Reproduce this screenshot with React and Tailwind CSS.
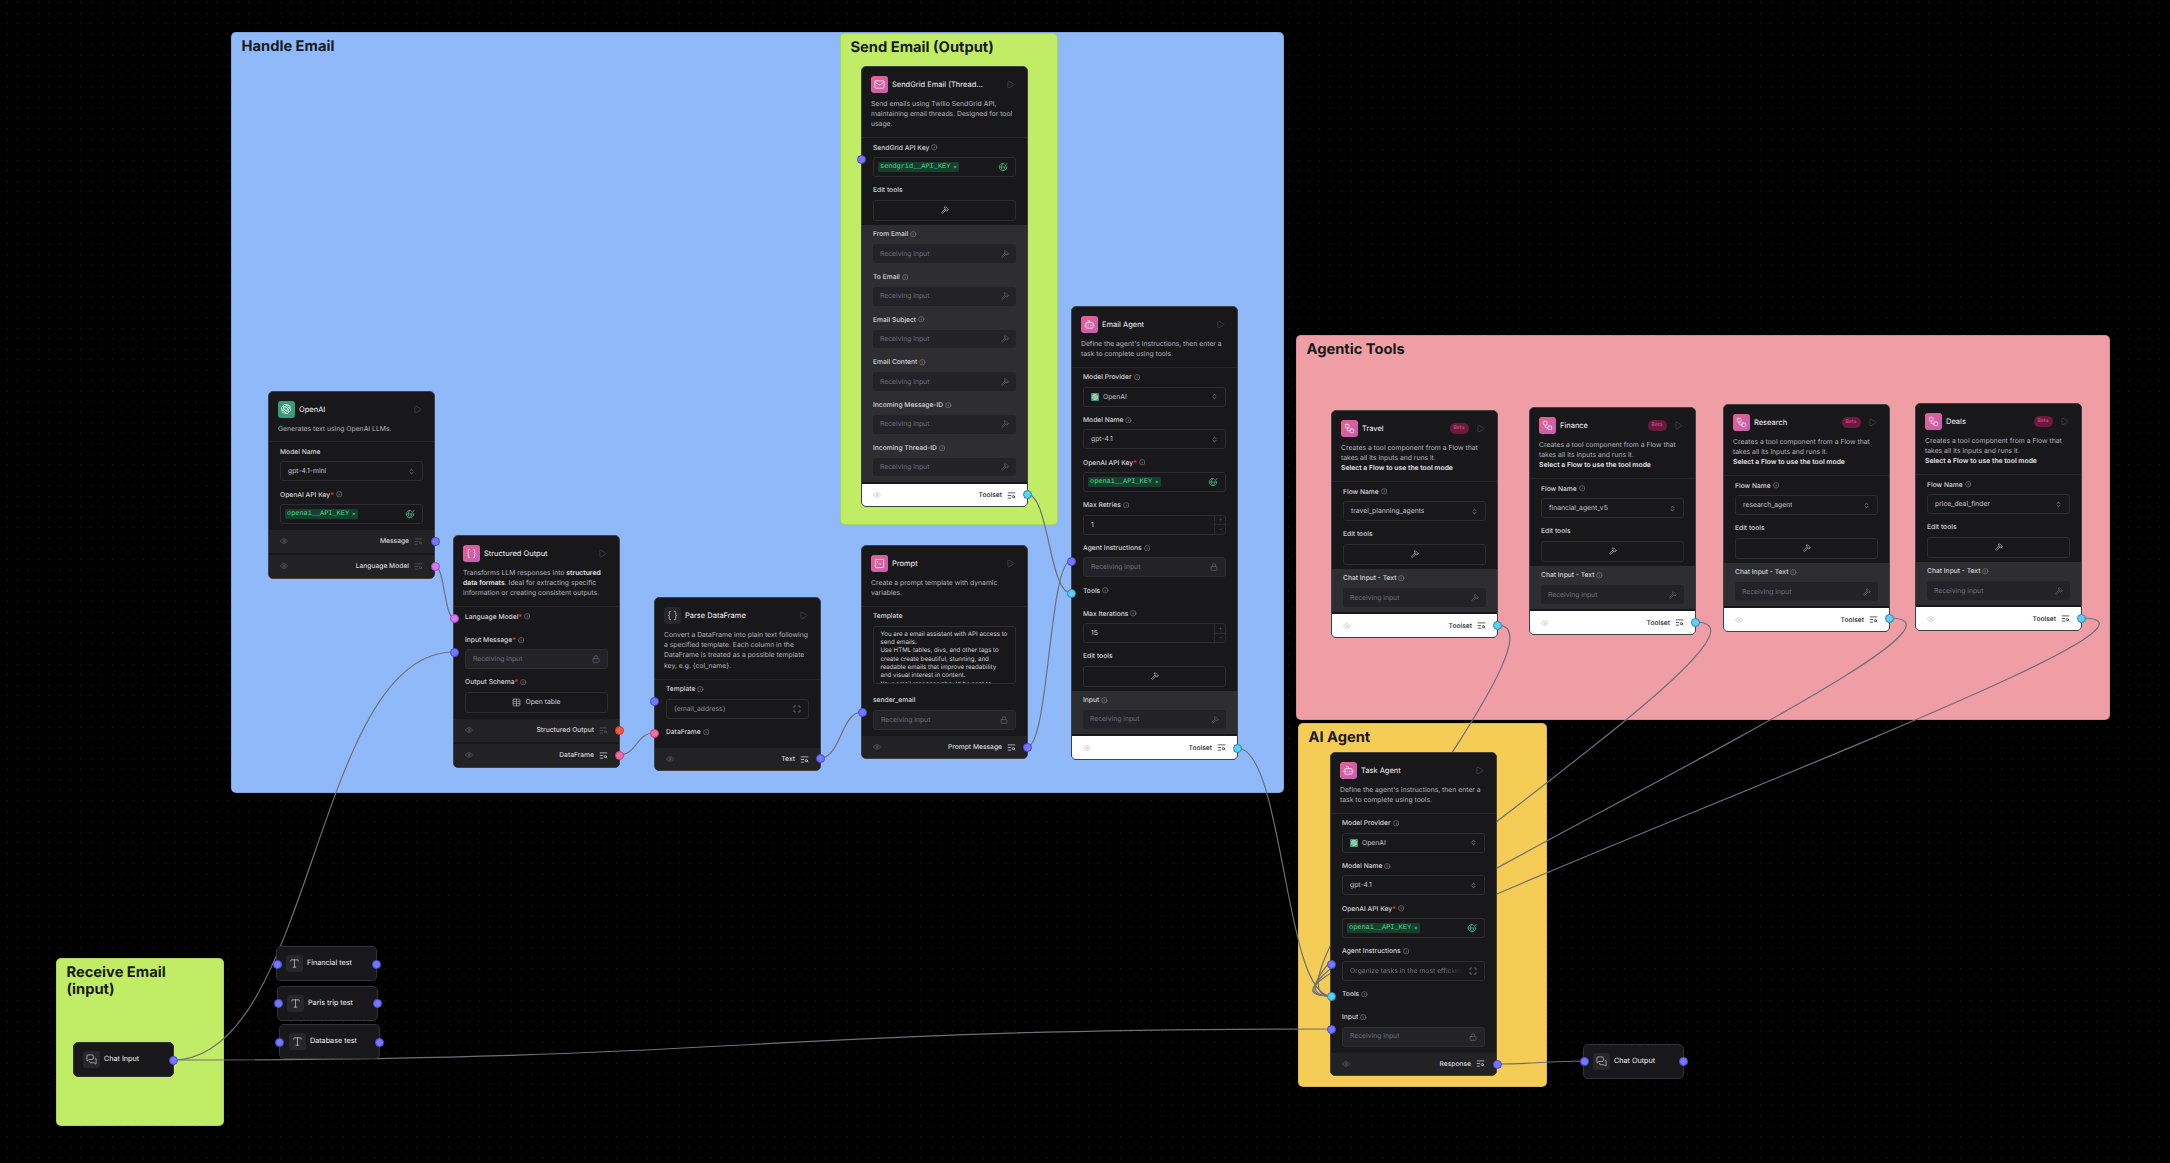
import React from 'react';
import { Bot, Braces, Eye, Hammer, Info, Lock, Mail, MessagesSquare, ChevronsUpDown, Play, Scan, SquareTerminal, Table, TextSearch, Type, Workflow, Plus, Minus } from 'lucide-react';
import { SiOpenai } from 'react-icons/si';

const H = {
  omMsg: [435, 541, 'blue'], omLm: [435, 566, 'purple'],
  soLm: [454, 618, 'purple'], soIn: [454, 652, 'blue'], soOut: [619, 730, 'red'], soDf: [619, 755, 'pink'],
  pdTpl: [654, 701, 'blue'], pdDf: [654, 733, 'pink'], pdOut: [820, 758, 'blue'],
  prIn: [862, 712, 'blue'], prOut: [1027, 747, 'blue'],
  sgKey: [861, 159, 'blue'], sgOut: [1027, 494, 'cyan'],
  eaIn: [1071, 561, 'blue'], eaTools: [1071, 593, 'cyan'], eaOut: [1237, 748, 'cyan'],
  taIn: [1331, 964, 'blue'], taTools: [1331, 996, 'cyan'], taInput: [1331, 1029, 'blue'], taOut: [1497, 1064, 'blue'],
  coIn: [1584, 1061, 'blue'], coOut: [1683, 1061, 'blue'],
  ciOut: [173, 1060, 'blue'],
  ftIn: [277, 964, 'blue'], ftOut: [376, 964, 'blue'],
  ptIn: [278, 1003, 'blue'], ptOut: [377, 1003, 'blue'],
  dtIn: [279, 1042, 'blue'], dtOut: [379, 1042, 'blue'],
  trOut: [1497, 625, 'cyan'], fiOut: [1695, 622, 'cyan'], reOut: [1889, 618, 'cyan'], deOut: [2081, 618, 'cyan'],
};

const EDGES = [
  ['omLm', 'soLm'], ['ciOut', 'soIn'], ['ciOut', 'taInput'], ['soDf', 'pdDf'], ['pdOut', 'prIn'],
  ['prOut', 'eaIn'], ['sgOut', 'eaTools'], ['eaOut', 'taTools'], ['trOut', 'taTools'], ['fiOut', 'taTools'],
  ['reOut', 'taTools'], ['deOut', 'taTools'], ['taOut', 'coIn'],
];

// same curve as react flow's bezier edge
const edgePath = ([sx, sy], [tx, ty]) => {
  const d = tx - sx;
  const off = d >= 0 ? d * 0.5 : 6.25 * Math.sqrt(-d);
  return `M${sx},${sy} C${sx + off},${sy} ${tx - off},${ty} ${tx},${ty}`;
};

const handleColors = {
  blue: 'bg-[#7379fa] border-[#4a45dd]',
  purple: 'bg-[#d77cf0] border-[#a63fd0]',
  red: 'bg-[#ee5a4a] border-[#c93a2e]',
  pink: 'bg-[#ee6ea8] border-[#c53c80]',
  cyan: 'bg-[#5fd0f0] border-[#1f86c0]',
};

const Handle = ({ at }) => (
  <div
    className={`absolute w-[9px] h-[9px] -ml-[4.5px] -mt-[4.5px] rounded-full border ${handleColors[at[2]]}`}
    style={{ left: at[0], top: at[1] }}
  />
);

const Group = ({ x, y, w, h, color, title }) => (
  <div
    className={`absolute rounded-[5px] border border-black/10 px-[9.5px] py-[5px] ${color}`}
    style={{ left: x, top: y, width: w, height: h }}
  >
    <div className="text-[14.7px] leading-[17px] font-bold text-[#18181b]">{title}</div>
  </div>
);

const Tip = () => <Info size={6.5} className="text-[#8b8b93] shrink-0" />;

const Label = ({ children, req, info = true }) => (
  <div className="flex items-center gap-[2px] h-[10px] text-[6.7px] font-medium text-[#d4d4d8] whitespace-nowrap">
    <span>{children}{req && <span className="text-[#ef4444]">*</span>}</span>
    {info && <Tip />}
  </div>
);

const Box = ({ children, className = '' }) => (
  <div className={`h-[20px] flex items-center rounded-[3px] border border-[#2c2c31] px-[7px] text-[6.8px] text-[#c4c4cc] ${className}`}>
    {children}
  </div>
);

const Select = ({ value, logo }) => (
  <Box className="justify-between">
    <span className="flex items-center gap-[4px] truncate">
      {logo && <span className="w-[8px] h-[8px] rounded-[1px] bg-[#3b9a77] flex items-center justify-center"><SiOpenai size={6} className="text-white" /></span>}
      {value}
    </span>
    <ChevronsUpDown size={7} className="text-[#a1a1aa]" />
  </Box>
);

const GlobeCheck = () => (
  <svg width="10" height="10" viewBox="0 0 24 24" fill="none" stroke="#3f9d6f" strokeWidth="2.4" strokeLinecap="round" strokeLinejoin="round">
    <path d="M21 12a9 9 0 1 1-8-8.9" />
    <path d="M3 12h18" />
    <path d="M12 3c-3 3-3.6 6-3.6 9s.6 6 3.6 9c2.4-2.4 3.4-5 3.6-7.5" />
    <path d="m15 6 2.5 2.5L22 3" />
  </svg>
);

const KeyInput = ({ value }) => (
  <Box className="justify-between !pl-[4px]">
    <span className="flex items-center gap-[3px] h-[10px] rounded-[1.5px] bg-[#173f30] px-[2px] text-[#4ade80] font-['Liberation_Mono',monospace] text-[6.9px]">
      {value}<span className="text-[#6ee7a0] text-[6px]">×</span>
    </span>
    <GlobeCheck />
  </Box>
);

const Locked = () => (
  <Box className="justify-between bg-[#232327] !text-[#71717a]">
    <span>Receiving input</span>
    <Lock size={8} className="text-[#6b6b73]" />
  </Box>
);

const NumberBox = ({ value }) => (
  <div className="h-[20px] flex items-center justify-between rounded-[3px] border border-[#2c2c31] pl-[7px] text-[6.8px] text-[#d4d4d8]">
    <span>{value}</span>
    <div className="w-[11px] h-full flex flex-col border-l border-[#2c2c31]">
      <div className="flex-1 flex items-center justify-center border-b border-[#2c2c31]"><Plus size={5} className="text-[#55555c]" /></div>
      <div className="flex-1 flex items-center justify-center"><Minus size={5} className="text-[#55555c]" /></div>
    </div>
  </div>
);

const EditTools = () => (
  <div className="flex flex-col gap-[4.5px]">
    <Label info={false}>Edit tools</Label>
    <div className="h-[21px] flex items-center justify-center rounded-[3px] border border-[#2c2c31]">
      <Hammer size={8} className="text-[#b4b4bb]" />
    </div>
  </div>
);

const Field = ({ label, req, info, children, pad }) => (
  <div className={`flex flex-col gap-[4.5px] ${pad ? 'pb-[5px]' : ''}`}>
    <Label req={req} info={info}>{label}</Label>
    {children}
  </div>
);

const ToolInputs = ({ names }) => (
  <div className="bg-[#2e2e32] px-[11px] pt-[4px] pb-[5.5px] flex flex-col gap-[9.2px] mt-[4.5px]">
    {names.map((n) => (
      <div key={n} className="flex flex-col gap-[5px]">
        <Label>{n}</Label>
        <div className="h-[18.5px] flex items-center justify-between rounded-[3px] bg-[#232327] px-[7px] text-[6.8px] text-[#71717a]">
          <span>Receiving input</span>
          <Hammer size={8} className="text-[#62626a]" />
        </div>
      </div>
    ))}
  </div>
);

const Output = ({ label, active, tool }) => (
  <div className={`h-[22.5px] flex items-center justify-between px-[11px] ${tool ? 'bg-white mt-[2px]' : 'bg-[#222225]'}`}>
    <Eye size={8} className={tool ? 'text-[#c4c4cc]' : 'text-[#62626a]'} />
    <div className={`flex items-center gap-[5px] text-[6.7px] font-medium ${tool ? 'text-[#27272a]' : 'text-[#d4d4d8]'}`}>
      <span>{label}</span>
      <TextSearch size={9} className={tool ? 'text-[#27272a]' : active ? 'text-[#d4d4d8]' : 'text-[#5a5a62]'} />
    </div>
  </div>
);

const NodeIcon = ({ icon: Icon, pink }) => (
  <div className={`w-[16.5px] h-[16.5px] shrink-0 rounded-[3px] flex items-center justify-center ${pink ? 'bg-gradient-to-br from-[#e4608f] to-[#c45fb5] text-white' : 'bg-[#27272a] text-[#d4d4d8]'}`}>
    <Icon size={11} strokeWidth={1.5} />
  </div>
);

const Node = ({ x, y, icon, pink = true, title, beta, children, desc, logo }) => (
  <div
    className="absolute w-[167px] rounded-[5px] border border-[#3f3f46] bg-[#18181b] overflow-hidden"
    style={{ left: x, top: y }}
  >
    <div className="px-[9px] pt-[9px] pb-[7.5px] border-b border-[#26262a]">
      <div className="flex items-center gap-[4.5px] h-[16.5px]">
        {logo ? (
          <div className="w-[16.5px] h-[16.5px] shrink-0 rounded-[3px] bg-[#3b9a77] flex items-center justify-center text-white"><SiOpenai size={10} /></div>
        ) : (
          <NodeIcon icon={icon} pink={pink} />
        )}
        <span className="flex-1 truncate text-[7.5px] text-[#f4f4f5]">{title}</span>
        {beta && <span className="h-[11px] px-[4px] rounded-full bg-[#6b1a3e] text-[#c4487f] text-[5px] font-semibold flex items-center">Beta</span>}
        <Play size={9} strokeWidth={1.5} className="text-[#55555c] ml-[3px] mr-[3px]" />
      </div>
      <div className="mt-[6px] text-[6.8px] leading-[10.4px] text-[#b4b4bb]">{desc}</div>
    </div>
    {children}
  </div>
);

const Body = ({ children, last }) => (
  <div className={`px-[11px] pt-[4.5px] flex flex-col gap-[8.15px] ${last ? 'pb-[6px]' : ''}`}>{children}</div>
);

const Footer = ({ children }) => <div className="flex flex-col gap-[2.5px] bg-[#18181b]">{children}</div>;

const MiniNode = ({ x, y, icon: Icon, title }) => (
  <div
    className="absolute w-[101px] h-[35px] rounded-[5px] border border-[#333338] bg-[#18181b] flex items-center gap-[4.5px] px-[9px]"
    style={{ left: x, top: y }}
  >
    <div className="w-[16.5px] h-[16.5px] rounded-[3px] bg-[#27272a] text-[#d4d4d8] flex items-center justify-center">
      <Icon size={11} strokeWidth={1.5} />
    </div>
    <span className="text-[7.2px] text-[#f4f4f5] whitespace-nowrap">{title}</span>
  </div>
);

const FlowDesc = () => (
  <>Creates a tool component from a Flow that takes all its inputs and runs it.<br /><b className="font-semibold text-[#e4e4e7]">Select a Flow to use the tool mode</b></>
);

const FlowNode = ({ x, y, title, flow }) => (
  <Node x={x} y={y} icon={Workflow} title={title} beta desc={<FlowDesc />}>
    <Body>
      <Field label="Flow Name"><Select value={flow} /></Field>
      <EditTools />
    </Body>
    <ToolInputs names={['Chat Input - Text']} />
    <Output label="Toolset" tool />
  </Node>
);

const AGENT_DESC = "Define the agent's instructions, then enter a task to complete using tools.";

export default function App() {
  return (
    <div className="relative w-[2170px] h-[1163px] overflow-hidden bg-black bg-[radial-gradient(#34343a_0.7px,transparent_0.8px)] bg-[size:10.5px_10.5px] bg-[position:2px_-2.5px] font-['Inter',sans-serif] [text-rendering:geometricPrecision]">
      <Group x={231} y={32} w={1053} h={761} color="bg-[#8fb9f9]" title="Handle Email" />
      <Group x={840} y={33} w={218} h={492} color="bg-[#c1ed66]" title="Send Email (Output)" />
      <Group x={1296} y={335} w={814} h={385} color="bg-[#ef9ea6]" title="Agentic Tools" />
      <Group x={1298} y={723} w={249} h={364} color="bg-[#f5cd56]" title="AI Agent" />
      <Group x={56} y={958} w={168} h={168} color="bg-[#c1ed66]" title={<>Receive Email<br />(input)</>} />

      <svg className="absolute inset-0" width="2170" height="1163" fill="none">
        {EDGES.map(([a, b]) => (
          <path key={a + b} d={edgePath(H[a], H[b])} stroke="#6f6f76" strokeWidth="1.2" />
        ))}
      </svg>

      <MiniNode x={73} y={1042} icon={MessagesSquare} title="Chat Input" />
      <MiniNode x={276} y={946} icon={Type} title="Financial test" />
      <MiniNode x={277} y={986} icon={Type} title="Paris trip test" />
      <MiniNode x={279} y={1024} icon={Type} title="Database test" />
      <MiniNode x={1583} y={1044} icon={MessagesSquare} title="Chat Output" />

      <Node x={268} y={391} logo title="OpenAI" desc="Generates text using OpenAI LLMs.">
        <Body last>
          <Field label="Model Name" info={false}><Select value="gpt-4.1-mini" /></Field>
          <Field label="OpenAI API Key" req><KeyInput value="openai__API_KEY" /></Field>
        </Body>
        <Footer>
          <Output label="Message" />
          <Output label="Language Model" />
        </Footer>
      </Node>

      <Node x={453} y={535} icon={Braces} title="Structured Output"
        desc={<>Transforms LLM responses into <b className="font-semibold text-[#e4e4e7]">structured data formats</b>. Ideal for extracting specific information or creating consistent outputs.</>}>
        <Body last>
          <Field label="Language Model" req pad />
          <Field label="Input Message" req><Locked /></Field>
          <Field label="Output Schema" req>
            <div className="h-[21px] flex items-center justify-center gap-[4px] rounded-[3px] border border-[#2c2c31] text-[6.8px] text-[#d4d4d8]">
              <Table size={9} strokeWidth={1.4} /> Open table
            </div>
          </Field>
        </Body>
        <Footer>
          <Output label="Structured Output" />
          <Output label="DataFrame" active />
        </Footer>
      </Node>

      <Node x={654} y={597} icon={Braces} pink={false} title="Parse DataFrame"
        desc="Convert a DataFrame into plain text following a specified template. Each column in the DataFrame is treated as a possible template key, e.g. {col_name}.">
        <Body last>
          <Field label="Template">
            <Box className="justify-between !text-[#8b8b93]"><span>{'{email_address}'}</span><Scan size={8} className="text-[#a1a1aa]" /></Box>
          </Field>
          <Field label="DataFrame" pad />
        </Body>
        <Output label="Text" active />
      </Node>

      <Node x={861} y={545} icon={SquareTerminal} title="Prompt" desc="Create a prompt template with dynamic variables.">
        <Body last>
          <Field label="Template" info={false}>
            <div className="h-[58px] mb-[3.5px] overflow-hidden rounded-[3px] border border-[#2c2c31] px-[6.5px] pt-[4px] text-[6.15px] leading-[8.3px] text-[#d4d4d8]">
              You are a email assistant with API access to send emails.<br />
              Use HTML tables, divs, and other tags to create create beautiful, stunning, and readable emails that improve readability and visual interest in content.<br />
              Your email response should be sent to
            </div>
          </Field>
          <Field label="sender_email" info={false}><Locked /></Field>
        </Body>
        <Output label="Prompt Message" active />
      </Node>

      <Node x={861} y={66} icon={Mail} title="SendGrid Email (Thread..."
        desc="Send emails using Twilio SendGrid API, maintaining email threads. Designed for tool usage.">
        <Body>
          <Field label="SendGrid API Key"><KeyInput value="sendgrid__API_KEY" /></Field>
          <EditTools />
        </Body>
        <ToolInputs names={['From Email', 'To Email', 'Email Subject', 'Email Content', 'Incoming Message-ID', 'Incoming Thread-ID']} />
        <Output label="Toolset" tool />
      </Node>

      <Node x={1071} y={306} icon={Bot} title="Email Agent" desc={AGENT_DESC}>
        <Body>
          <Field label="Model Provider"><Select value="OpenAI" logo /></Field>
          <Field label="Model Name"><Select value="gpt-4.1" /></Field>
          <Field label="OpenAI API Key" req><KeyInput value="openai__API_KEY" /></Field>
          <Field label="Max Retries"><NumberBox value="1" /></Field>
          <Field label="Agent Instructions"><Locked /></Field>
          <Field label="Tools" pad />
          <Field label="Max Iterations"><NumberBox value="15" /></Field>
          <EditTools />
        </Body>
        <ToolInputs names={['Input']} />
        <Output label="Toolset" tool />
      </Node>

      <FlowNode x={1331} y={410} title="Travel" flow="travel_planning_agents" />
      <FlowNode x={1529} y={407} title="Finance" flow="financial_agent_v5" />
      <FlowNode x={1723} y={404} title="Research" flow="research_agent" />
      <FlowNode x={1915} y={403} title="Deals" flow="price_deal_finder" />

      <Node x={1330} y={752} icon={Bot} title="Task Agent" desc={AGENT_DESC}>
        <Body last>
          <Field label="Model Provider"><Select value="OpenAI" logo /></Field>
          <Field label="Model Name"><Select value="gpt-4.1" /></Field>
          <Field label="OpenAI API Key" req><KeyInput value="openai__API_KEY" /></Field>
          <Field label="Agent Instructions">
            <Box className="justify-between !text-[#71717a]">
              <span className="truncate [mask-image:linear-gradient(to_right,black_85%,transparent)]">Organize tasks in the most efficient</span>
              <Scan size={8} className="text-[#a1a1aa] shrink-0 ml-[2px]" />
            </Box>
          </Field>
          <Field label="Tools" pad />
          <Field label="Input"><Locked /></Field>
        </Body>
        <Output label="Response" active />
      </Node>

      {Object.entries(H).map(([k, at]) => <Handle key={k} at={at} />)}
    </div>
  );
}
